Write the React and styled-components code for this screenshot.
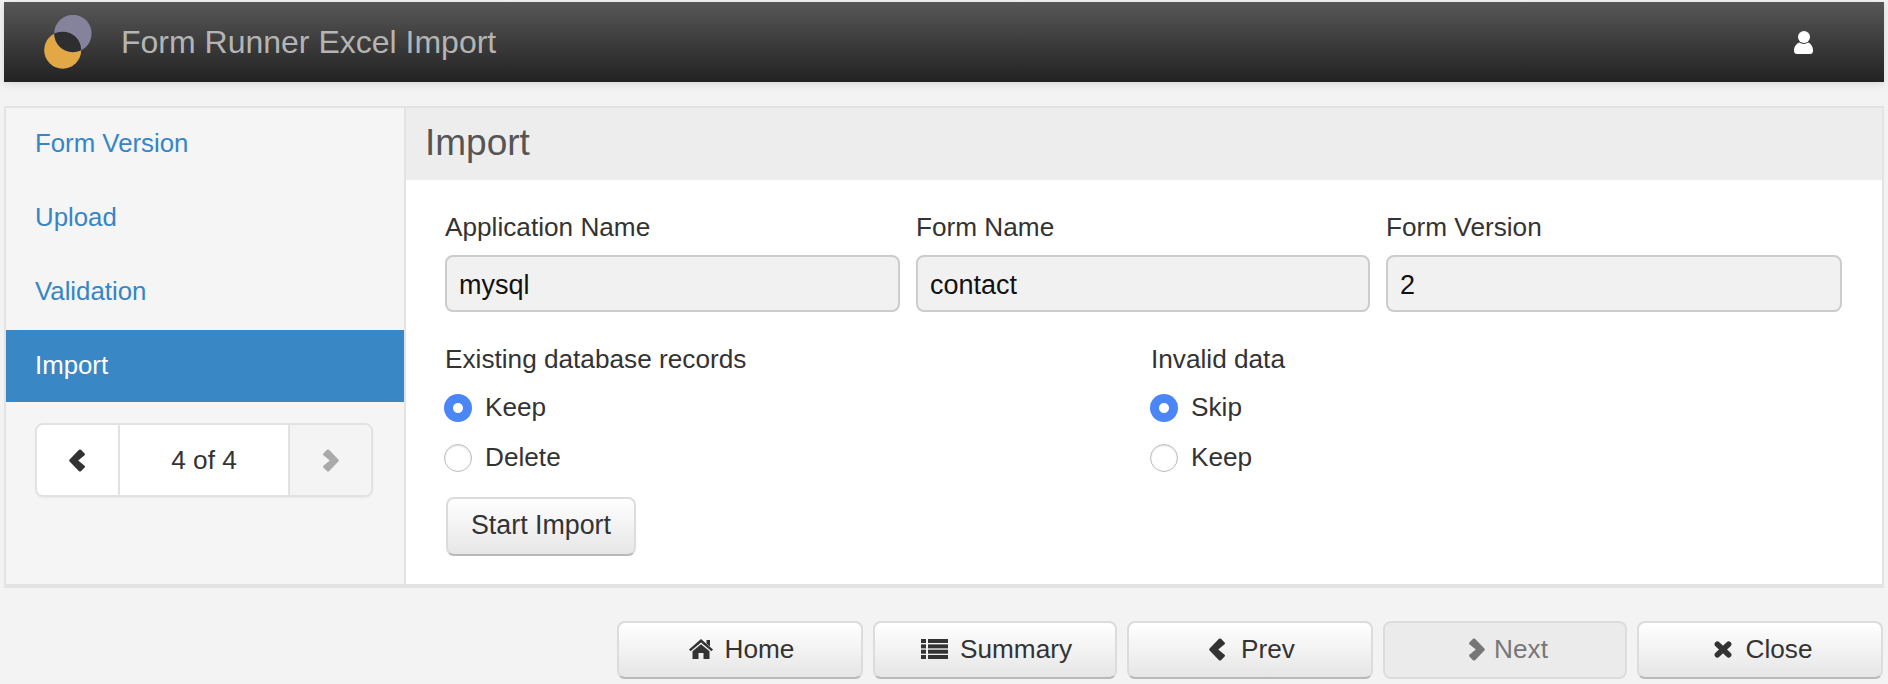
import React from 'react'
import styled, { createGlobalStyle } from 'styled-components'

const Global = createGlobalStyle`
html, body {
  margin: 0;
  height: 100%;
  overflow: hidden;
  background: #f3f3f3;
}
* { box-sizing: border-box; }
body {
  font-family: "Liberation Sans", Arial, sans-serif;
  font-size: 26.2px;
  color: #333;
}
`

const Page = styled.div`
  width: 1888px;
  height: 684px;
  padding: 2px 4px 0;
`

const Header = styled.header`
  height: 80px;
  display: flex;
  align-items: center;
  padding: 0 71px 0 40px;
  background: linear-gradient(#575757, #222);
  box-shadow: 0 2px 8px rgba(0, 0, 0, 0.12);
`

const Brand = styled.div`
  flex: 1;
  font-size: 32px;
  color: #b4b4b4;
  margin-left: 29px;
`

const Panel = styled.section`
  display: flex;
  margin-top: 24px;
  height: 482px;
  border: 2px solid #e3e3e3;
  border-bottom-width: 4px;
`

const Sidebar = styled.aside`
  width: 400px;
  flex: none;
  background: #f5f5f5;
  border-right: 2px solid #e3e3e3;
`

const Nav = styled.nav`
  display: flex;
  flex-direction: column;
  gap: 4px;
  font-size: 25.8px;
`

const NavItem = styled.a`
  display: flex;
  align-items: center;
  padding-left: 29px;
  height: ${p => (p.$active ? '72px' : '70px')};
  padding-bottom: ${p => (p.$active ? '2px' : '0')};
  color: ${p => (p.$active ? '#fff' : '#3685c6')};
  background: ${p => (p.$active ? '#3a87c6' : 'transparent')};
`

const Pager = styled.div`
  display: grid;
  grid-template-columns: 81px 170px 83px;
  width: 338px;
  height: 74px;
  margin: 21px 0 0 29px;
  border-radius: 8px;
  overflow: hidden;
  border: 2px solid #e2e2e2;
  box-shadow: 0 1px 2px rgba(0, 0, 0, 0.06);
`

const PagerCell = styled.div`
  display: flex;
  align-items: center;
  justify-content: center;
  background: ${p => (p.$off ? '#f4f4f4' : '#fff')};
  color: ${p => (p.$off ? '#aaa' : '#333')};
  border-left: ${p => (p.$first ? 'none' : '2px solid #e2e2e2')};
`

const Content = styled.div`
  flex: 1;
  background: #fff;
`

const Title = styled.div`
  height: 72px;
  display: flex;
  align-items: center;
  padding-left: 19px;
  padding-bottom: 2px;
  background: #ededed;
  font-size: 37px;
  color: #555;
`

const Form = styled.div`
  padding: 32px 40px 0 39px;
`

const FieldRow = styled.div`
  display: grid;
  grid-template-columns: 455px 454px 456px;
  gap: 16px;
`

const Label = styled.div`
  height: 30px;
  line-height: 30px;
  white-space: nowrap;
`

const TextInput = styled.input`
  display: block;
  width: 100%;
  height: 57px;
  margin-top: 13px;
  padding: 3px 12px 0;
  border: 2px solid #ccc;
  border-radius: 8px;
  background: #f1f1f1;
  color: #111;
  font: inherit;
  font-size: 27px;
  outline: none;
`

const Choices = styled.div`
  display: grid;
  grid-template-columns: 706px 1fr;
  margin-top: 32px;
`

const RadioList = styled.div`
  display: flex;
  flex-direction: column;
  gap: 22px;
  margin-top: 20px;
`

const RadioRow = styled.label`
  display: flex;
  align-items: flex-start;
  gap: 13px;
  height: 28px;
  line-height: 26px;
  margin-left: -1px;
`

const Radio = styled.input`
  appearance: none;
  flex: none;
  width: 28px;
  height: 28px;
  margin: 0;
  border-radius: 50%;
  background: #fff;
  border: 1.5px solid #bcbcbc;
  box-shadow: inset 0 1px 2px rgba(0, 0, 0, 0.12);
  &:checked {
    border: none;
    box-shadow: none;
    background: radial-gradient(circle, #fff 0, #fff 4.5px, #4a86f6 5.5px);
  }
`

const Button = styled.button`
  display: flex;
  align-items: center;
  justify-content: center;
  gap: ${p => p.$gap || 12}px;
  width: ${p => p.$w || 246}px;
  height: 58px;
  padding: 0 0 2px ${p => (p.$pad === undefined ? 4 : p.$pad)}px;
  font: inherit;
  color: ${p => (p.disabled ? '#777' : '#333')};
  background: ${p => (p.disabled ? '#ebebeb' : 'linear-gradient(#fff, #e6e6e6)')};
  border: 2px solid #dcdcdc;
  border-bottom-color: ${p => (p.disabled ? '#dcdcdc' : '#b9b9b9')};
  border-radius: 8px;
`

const StartButton = styled(Button)`
  margin: 25px 0 0 1px;
  height: 59px;
  font-size: 26.8px;
`

const Footer = styled.footer`
  display: flex;
  justify-content: flex-end;
  gap: 10px;
  margin-top: 33px;
  padding-right: 1px;
`

const Logo = () => (
  <svg width="48" height="54" viewBox="0 0 48 54" style={{ filter: 'blur(0.4px)' }}>
    <defs>
      <clipPath id="logoClip">
        <circle cx="28.9" cy="18.5" r="18.7" />
      </clipPath>
    </defs>
    <circle cx="18.7" cy="35.2" r="18.5" fill="#e2a845" />
    <circle cx="28.9" cy="18.5" r="18.7" fill="#85829c" />
    <circle cx="18.7" cy="35.2" r="18.5" fill="#2e2e30" clipPath="url(#logoClip)" />
  </svg>
)

const UserIcon = () => (
  <svg width="19" height="23" viewBox="0 0 19 23" fill="#fff">
    <circle cx="10" cy="6" r="6" />
    <path d="M0 19.5C0 15.5 2.5 12.5 5.5 11.5C7.5 13.4 12 13.4 14 11.5C17 12.5 19 15.5 19 19.5Q19 23 16 23H3Q0 23 0 19.5Z" />
  </svg>
)

const Chevron = ({ right }) => (
  <svg width="17" height="23" viewBox="0 0 17 23" fill="currentColor">
    <path
      transform={right ? 'matrix(-1 0 0 1 17 0)' : undefined}
      d="M0.6 10.4L10 0.8Q11 0 12 0.8L15.6 4.4Q16.4 5.4 15.6 6.2L9.2 11.5L15.6 16.8Q16.4 17.6 15.6 18.6L12 22.2Q11 23 10 22.2L0.6 12.6Q-0.2 11.5 0.6 10.4Z"
    />
  </svg>
)

const HomeIcon = () => (
  <svg width="24" height="20" viewBox="0 0 24 20" fill="currentColor">
    <path d="M12 0L24 10.5L22.5 12.2L12 3.4L1.5 12.2L0 10.5Z" />
    <path d="M17.5 1H21V7.6L17.5 4.6Z" />
    <path d="M12 5.2L20.5 12.3V20H14.5V14H9.5V20H3.5V12.3Z" />
  </svg>
)

const ListIcon = () => (
  <svg width="27" height="20" viewBox="0 0 27 20" fill="currentColor">
    {[0, 5.35, 10.7, 16].map(y => (
      <g key={y}>
        <rect x="0" y={y} width="5" height="4" />
        <rect x="7" y={y} width="20" height="4" />
      </g>
    ))}
  </svg>
)

const CloseIcon = () => (
  <svg width="18" height="17" viewBox="0 0 18 17" stroke="currentColor" strokeWidth="5.6" strokeLinecap="round">
    <path d="M3.4 3.2L14.6 13.8M14.6 3.2L3.4 13.8" />
  </svg>
)

const App = () => {
  return (
    <Page>
      <Global />
      <Header>
        <Logo />
        <Brand>Form Runner Excel Import</Brand>
        <UserIcon />
      </Header>
      <Panel>
        <Sidebar>
          <Nav>
            <NavItem>Form Version</NavItem>
            <NavItem>Upload</NavItem>
            <NavItem>Validation</NavItem>
            <NavItem $active>Import</NavItem>
          </Nav>
          <Pager>
            <PagerCell $first><Chevron /></PagerCell>
            <PagerCell>4 of 4</PagerCell>
            <PagerCell $off><Chevron right /></PagerCell>
          </Pager>
        </Sidebar>
        <Content>
          <Title>Import</Title>
          <Form>
            <FieldRow>
              <div>
                <Label>Application Name</Label>
                <TextInput readOnly value="mysql" />
              </div>
              <div>
                <Label>Form Name</Label>
                <TextInput readOnly value="contact" />
              </div>
              <div>
                <Label>Form Version</Label>
                <TextInput readOnly value="2" />
              </div>
            </FieldRow>
            <Choices>
              <div>
                <Label>Existing database records</Label>
                <RadioList>
                  <RadioRow><Radio type="radio" name="existing" defaultChecked />Keep</RadioRow>
                  <RadioRow><Radio type="radio" name="existing" />Delete</RadioRow>
                </RadioList>
              </div>
              <div>
                <Label>Invalid data</Label>
                <RadioList>
                  <RadioRow><Radio type="radio" name="invalid" defaultChecked />Skip</RadioRow>
                  <RadioRow><Radio type="radio" name="invalid" />Keep</RadioRow>
                </RadioList>
              </div>
            </Choices>
            <StartButton $w={190} $pad={0}>Start Import</StartButton>
          </Form>
        </Content>
      </Panel>
      <Footer>
        <Button $pad={3}><HomeIcon />Home</Button>
        <Button $w={244} $pad={3}><ListIcon />Summary</Button>
        <Button $gap={15}><Chevron />Prev</Button>
        <Button $w={244} disabled $gap={9} $pad={6}><Chevron right />Next</Button>
        <Button $gap={14} $pad={6}><CloseIcon />Close</Button>
      </Footer>
    </Page>
  )
}

export default App
